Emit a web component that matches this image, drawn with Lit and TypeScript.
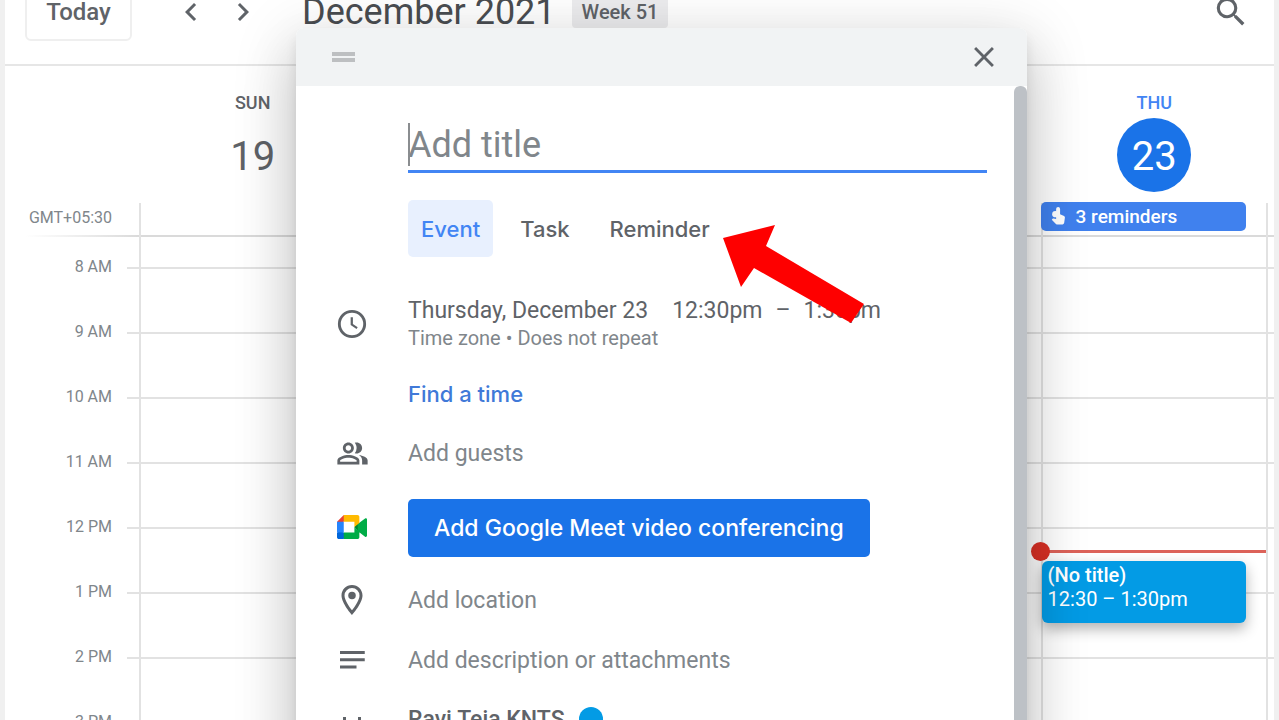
import { LitElement, html, css, svg } from "lit";
import { customElement, state } from "lit/decorators.js";

const HOURS = ["8 AM", "9 AM", "10 AM", "11 AM", "12 PM", "1 PM", "2 PM", "3 PM"];
const TABS = ["Event", "Task", "Reminder"];

const icon = (body: unknown, size = 36) =>
  html`<svg width=${size} height=${size} viewBox="0 0 24 24" fill="currentColor" aria-hidden="true">${body}</svg>`;

const ICONS = {
  prev: svg`<path d="M15.4 7.4 14 6l-6 6 6 6 1.4-1.4L10.8 12z"/>`,
  next: svg`<path d="M10 6 8.6 7.4l4.6 4.6-4.6 4.6L10 18l6-6z"/>`,
  search: svg`<path d="M15.5 14h-.79l-.28-.27A6.47 6.47 0 0 0 16 9.5 6.5 6.5 0 1 0 9.5 16c1.61 0 3.09-.59 4.23-1.57l.27.28v.79l5 4.99L20.49 19l-4.99-5zm-6 0C7.01 14 5 11.99 5 9.5S7.01 5 9.5 5 14 7.01 14 9.5 11.99 14 9.5 14z"/>`,
  close: svg`<path d="M19 6.41 17.59 5 12 10.59 6.41 5 5 6.41 10.59 12 5 17.59 6.41 19 12 13.41 17.59 19 19 17.59 13.41 12z"/>`,
  clock: svg`<path d="M12 2.6a9.4 9.4 0 1 0 0 18.8 9.4 9.4 0 0 0 0-18.8zm0 16.9a7.5 7.5 0 1 1 0-15 7.5 7.5 0 0 1 0 15zM12.6 7.5h-1.5v5.2l3.9 2.6.8-1.2-3.2-2.1z"/>`,
  people: svg`<path d="M15 8c0-1.42-.5-2.73-1.33-3.76.42-.14.86-.24 1.33-.24 2.21 0 4 1.79 4 4s-1.79 4-4 4c-.43 0-.84-.09-1.23-.21-.03-.01-.06-.02-.1-.03A5.98 5.98 0 0 0 15 8zm1.66 5.13C18.03 14.06 19 15.32 19 17v3h4v-3c0-2.18-3.58-3.47-6.34-3.87z"/><path d="M9 6c-1.1 0-2 .9-2 2s.9 2 2 2 2-.9 2-2-.9-2-2-2m0 9c-2.7 0-5.8 1.29-6 2.01V18h12v-1c-.2-.71-3.3-2-6-2M9 4c2.21 0 4 1.79 4 4s-1.79 4-4 4-4-1.79-4-4 1.79-4 4-4zm0 9c2.67 0 8 1.34 8 4v3H1v-3c0-2.66 5.33-4 8-4z"/>`,
  pin: svg`<path d="M12 2C8.1 2 5 5.1 5 9c0 5.2 7 13 7 13s7-7.8 7-13c0-3.9-3.1-7-7-7zM7 9a5 5 0 0 1 10 0c0 2.9-2.9 7.2-5 9.9C9.9 16.2 7 11.8 7 9z"/><circle cx="12" cy="9" r="2.5"/>`,
  notes: svg`<path d="M4 6h16.500v2H4zM4 10.800h16.500v2H4zM4 15.600h11v2H4z"/>`,
  calendar: svg`<path d="M19 4h-1V2h-2v2H8V2H6v2H5a2 2 0 0 0-2 2v14c0 1.1.9 2 2 2h14a2 2 0 0 0 2-2V6a2 2 0 0 0-2-2zm0 16H5V10h14zm0-12H5V6h14z"/>`,
  meet: svg`<path fill="#00832d" d="M13.6 12l2.2 2.6 3-.2V9.5l-3-.1z"/><path fill="#0066da" d="M2 15.6v3.2c0 .7.6 1.2 1.2 1.2h3.3l.7-2.2-.7-2.2-2.2-.7z"/><path fill="#e94235" d="M6.5 4 2 8.5l2.3.7 2.2-.7.7-2.1z"/><path fill="#2684fc" d="M2 8.5h4.5v7.1H2z"/><path fill="#00ac47" d="M20.7 6.3 15.8 10v4.6l4.9 3.9c.5.4 1.3 0 1.3-.6V6.9c0-.6-.8-1-1.3-.6zM13.6 12v3.6H6.5V20h9.1c.7 0 1.3-.5 1.3-1.2v-3.4z"/><path fill="#ffba00" d="M15.6 4H6.5v4.5h7.1V12l3.3-2.6V5.2c0-.7-.6-1.2-1.3-1.2z"/>`,
  finger: svg`<path d="M9 2.5a2.5 2.5 0 0 1 5 0V9l5 2.3c.8.4 1.2 1.1 1.1 2l-.9 6.7c-.1 1.1-1 2-2.2 2H10c-.6 0-1.2-.3-1.6-.7L3.5 16l1-1.1c.4-.3.9-.4 1.4-.3L9 15.3z"/><circle cx="8" cy="9" r="4"/>`,
};

@customElement("app-root")
export class AppRoot extends LitElement {
  @state() private tab = "Event";

  static styles = css`
    :host {
      display: block;
      font-family: Roboto, "Liberation Sans", sans-serif;
      color: #5f6368;
    }
    * { box-sizing: border-box; }
    button, input { font: inherit; color: inherit; background: none; border: 0; padding: 0; margin: 0; }
    button { cursor: pointer; }
    svg { display: block; flex: none; }
    .page {
      position: relative;
      height: 100vh;
      overflow: hidden;
      background: #fff;
      border: solid #f0f0f0;
      border-width: 0 5px;
      display: flex;
      flex-direction: column;
    }
    .top {
      flex: none;
      display: flex;
      align-items: center;
      margin-top: -17px;
      padding: 0 24px 23px 20px;
      border-bottom: 2px solid #e6e6e6;
    }
    .today {
      width: 107px;
      height: 58px;
      border: 2px solid #efefef;
      border-radius: 6px;
      font-size: 24px;
      font-weight: 500;
    }
    .nav { display: flex; gap: 16px; margin-left: 41px; }
    .month { margin: 0 0 0 41px; font-size: 36px; line-height: 40px; font-weight: 400; color: #4a4d51; }
    .week {
      margin-left: 16px;
      padding: 0 10px;
      border-radius: 4px;
      background: #ececee;
      font-size: 20px;
      line-height: 32px;
      font-weight: 500;
    }
    .search { margin-left: auto; }

    .days, .grid {
      display: grid;
      grid-template-columns: 134px repeat(5, 1fr) 8px;
    }
    .days {
      flex: none;
      height: 171px;
      background: linear-gradient(90deg, #fff 20px, #dadada 134px) bottom / 100% 2px no-repeat;
    }
    .zone { align-self: end; padding: 0 27px 7px 0; font-size: 16px; line-height: 24px; text-align: right; color: #80868b; }
    .day {
      display: grid;
      grid-template-rows: 52px 74px 10px 1fr;
      justify-items: center;
      padding-left: 2px;
      background: linear-gradient(#e2e2e2, #e2e2e2) left bottom / 2px 34px no-repeat;
    }
    .name { align-self: end; font-size: 18px; line-height: 30px; font-weight: 500; }
    .num { padding-top: 2px; height: 74px; font-size: 40px; line-height: 74px; width: 74px; text-align: center; border-radius: 50%; }
    .active .name { color: #4285f4; }
    .active .num { background: #1a73e8; color: #fff; }
    .chip {
      grid-row: 4;
      justify-self: stretch;
      display: flex;
      align-items: center;
      gap: 8px;
      height: 29px;
      margin: 0 20px 0 -2px;
      padding-left: 8px;
      border-radius: 5px;
      background: #4081ee;
      color: #fff;
      font-size: 19px;
      font-weight: 500;
    }
    .edge { background: linear-gradient(#e2e2e2, #e2e2e2) left bottom / 2px 34px no-repeat; }

    .grid { flex: 1; min-height: 0; }
    .gutter { display: flex; justify-content: flex-end; }
    .hours { list-style: none; margin: 0; padding: 20px 15px 0 0; display: grid; align-content: start; gap: 45px; text-align: right; font-size: 16px; line-height: 20px; color: #80868b; }
    .tick { width: 12px; }
    .lined { background: repeating-linear-gradient(#0000 0 63px, #e2e2e2 63px 65px) 0 -33px; background-size: 100% 65px; }
    .col { position: relative; border-left: 2px solid #e2e2e2; }
    .now {
      position: absolute;
      top: 313px;
      left: 0;
      right: 0;
      height: 3px;
      background: #dc6259;
    }
    .now::before {
      content: "";
      position: absolute;
      left: -12px;
      top: -8px;
      width: 19px;
      height: 19px;
      border-radius: 50%;
      background: #d93025;
    }
    .event {
      position: absolute;
      top: 324px;
      left: -1px;
      right: 20px;
      height: 62px;
      display: flex;
      flex-direction: column;
      align-items: flex-start;
      justify-content: flex-start;
      padding: 2px 6px;
      border-radius: 6px;
      background: #039be5;
      box-shadow: 0 6px 14px rgba(0, 0, 0, 0.3);
      color: #fff;
      font-size: 20px;
      line-height: 24px;
    }
    .event b { font-weight: 500; }

    .dialog {
      position: absolute;
      top: 28px;
      bottom: -60px;
      left: 291px;
      right: 247px;
      background: #fff;
      border-radius: 8px;
      box-shadow: 0 32px 56px 2px rgba(0, 0, 0, 0.14), 0 12px 60px 8px rgba(0, 0, 0, 0.12), 0 8px 12px rgba(0, 0, 0, 0.08);
    }
    .bar {
      display: flex;
      align-items: center;
      justify-content: space-between;
      height: 58px;
      padding: 0 26px 0 36px;
      background: #f1f3f4;
      border-radius: 8px 8px 0 0;
    }
    .grip { width: 23px; height: 10px; border: solid #bdbfc1; border-width: 4px 0; }
    .body { display: flex; height: 100%; }
    .form { flex: 1; min-width: 0; padding: 34px 27px 0 0; }
    .thumb { width: 13px; border-radius: 6px 6px 0 0; background: #bdc1c6; }
    .row { display: grid; grid-template-columns: 112px 1fr; align-items: center; }
    .row > svg { justify-self: center; }
    .row > :last-child { grid-column: 2; }
    .title {
      width: 100%;
      height: 53px;
      border-bottom: 3px solid #4285f4;
      outline: none;
      font-size: 36px;
    }
    .field { width: 100%; height: 60px; font-size: 23px; outline: none; }
    .field::placeholder, .title::placeholder { color: #80868b; opacity: 1; }
    .titlebox { display: flex; position: relative; }
    .titlebox::before { content: ""; position: absolute; left: 0; top: 3px; width: 2px; height: 43px; background: #8a8d90; }
    .tab, .find, .meet { font-family: Inter, Roboto, sans-serif; font-size: 22px; font-weight: 500; }
    .tabs { display: flex; gap: 14px; margin-top: 27px; }
    .tab { height: 57px; padding: 0 13px; border-radius: 5px; }
    .tab.on { background: #e8f0fe; color: #4285f4; }
    .when { margin-top: 40px; }
    .dates { display: flex; gap: 24px; font-size: 23px; line-height: 28px; }
    .times { display: flex; gap: 13px; }
    .sub { font-size: 20px; line-height: 26px; color: #80868b; }
    .find { justify-self: start; margin: 31px 0 17px; line-height: 24px; color: #4079d8; }
    .meet {
      justify-self: start;
      height: 58px;
      margin: 16px 0 13px;
      padding: 0 26px;
      border-radius: 5px;
      background: #1a73e8;
      color: #fff;
      font-size: 23px;
    }
    .owner { display: flex; align-items: center; gap: 14px; height: 84px; padding-bottom: 26px; font-size: 23px; font-weight: 500; }
    .dot { width: 24px; height: 24px; border-radius: 50%; background: #039be5; }
    .arrow { position: absolute; left: 427px; top: 195px; }
  `;

  render() {
    return html`
      <div class="page">
        <header class="top">
          <button class="today">Today</button>
          <div class="nav">
            <button aria-label="Previous week">${icon(ICONS.prev)}</button>
            <button aria-label="Next week">${icon(ICONS.next)}</button>
          </div>
          <h1 class="month">December 2021</h1>
          <span class="week">Week 51</span>
          <button class="search" aria-label="Search">${icon(ICONS.search, 38)}</button>
        </header>
        <section class="days">
          <div class="zone">GMT+05:30</div>
          <div class="day"><span class="name">SUN</span><span class="num">19</span></div>
          <div class="day"></div>
          <div class="day"></div>
          <div class="day"></div>
          <div class="day active">
            <span class="name">THU</span><span class="num">23</span>
            <button class="chip">${icon(ICONS.finger, 19)}<span>3 reminders</span></button>
          </div>
          <div class="edge"></div>
        </section>
        <section class="grid">
          <div class="gutter">
            <ul class="hours">${HOURS.map((h) => html`<li>${h}</li>`)}</ul>
            <div class="tick lined"></div>
          </div>
          <div class="col lined"></div>
          <div class="col lined"></div>
          <div class="col lined"></div>
          <div class="col lined"></div>
          <div class="col lined">
            <div class="now"></div>
            <button class="event"><b>(No title)</b><span>12:30 – 1:30pm</span></button>
          </div>
          <div class="col lined"></div>
        </section>

        <div class="dialog" role="dialog" aria-label="New event">
          <div class="bar">
            <span class="grip"></span>
            <button aria-label="Close">${icon(ICONS.close, 34)}</button>
          </div>
          <div class="body">
            <div class="form">
              <div class="row">
                <div class="titlebox"><input class="title" aria-label="Title" placeholder="Add title" /></div>
              </div>
              <div class="row">
                <div class="tabs" role="tablist">
                  ${TABS.map(
                    (t) => html`<button
                      role="tab"
                      class="tab ${t === this.tab ? "on" : ""}"
                      aria-selected=${t === this.tab}
                      @click=${() => (this.tab = t)}
                    >${t}</button>`
                  )}
                </div>
              </div>
              <div class="row when">
                ${icon(ICONS.clock)}
                <div>
                  <div class="dates">
                    <span>Thursday, December 23</span>
                    <span class="times"><span>12:30pm</span><span>–</span><span>1:30pm</span></span>
                  </div>
                  <div class="sub">Time zone • Does not repeat</div>
                </div>
              </div>
              <div class="row"><button class="find">Find a time</button></div>
              <div class="row">
                ${icon(ICONS.people, 33)}
                <input class="field" aria-label="Guests" placeholder="Add guests" />
              </div>
              <div class="row">
                ${icon(ICONS.meet, 36)}
                <button class="meet">Add Google Meet video conferencing</button>
              </div>
              <div class="row">
                ${icon(ICONS.pin)}
                <input class="field" aria-label="Location" placeholder="Add location" />
              </div>
              <div class="row">
                ${icon(ICONS.notes)}
                <input class="field" aria-label="Description" placeholder="Add description or attachments" />
              </div>
              <div class="row">
                ${icon(ICONS.calendar)}
                <div class="owner"><span>Ravi Teja KNTS</span><span class="dot"></span></div>
              </div>
            </div>
            <div class="thumb"></div>
          </div>
          <svg class="arrow" width="142" height="102" viewBox="0 0 142 102" aria-hidden="true">
            <path fill="#fe0000" d="M0 15 52 2 43 23 141 81 128 100 31 45 18 64z" />
          </svg>
        </div>
      </div>
    `;
  }
}
